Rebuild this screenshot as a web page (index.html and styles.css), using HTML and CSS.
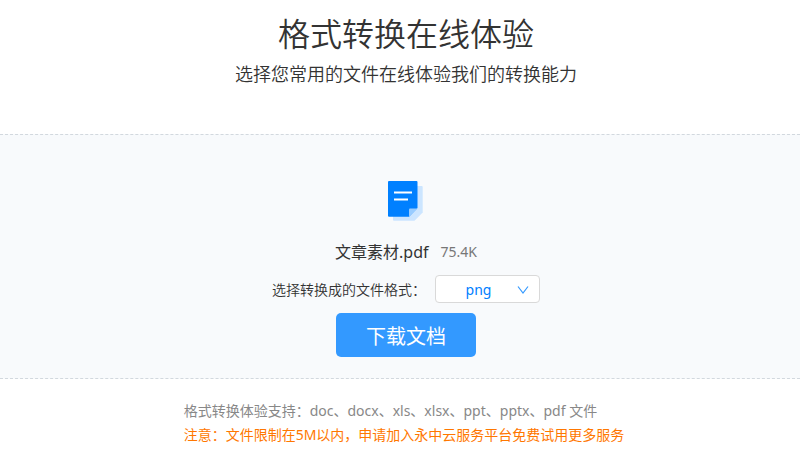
FILE: index.html
```html
<!DOCTYPE html>
<html lang="zh-CN">
<head>
    <meta charset="UTF-8">
    <meta name="viewport" content="width=device-width, initial-scale=1.0">
    <title>格式转换在线体验</title>
    <link rel="stylesheet" href="styles.css">
</head>
<body>
<header class="header">
    <h1 class="title">格式转换在线体验</h1>
    <p class="subtitle">选择您常用的文件在线体验我们的转换能力</p>
</header>

<main class="convert">
    <svg class="file-icon" width="36" height="40" viewBox="0 0 36 40" aria-hidden="true">
        <path d="M6 5h27.700a1 1 0 0 1 1 1v25.500L26.500 39.700H6a1 1 0 0 1-1-1V6a1 1 0 0 1 1-1z" fill="#cce5ff"/>
        <path d="M1 0h27.500a1 1 0 0 1 1 1v26l-8.500 8.800H1a1 1 0 0 1-1-1V1a1 1 0 0 1 1-1z" fill="#0080ff"/>
        <path d="M21 35.800v-7.300a1 1 0 0 1 1-1h7.500z" fill="#99ccff"/>
        <path d="M6 11.500h18M6 18.500h14" stroke="#fff" stroke-width="2"/>
    </svg>
    <div class="file">
        <span class="file-name">文章素材.pdf</span>
        <span class="file-size">75.4K</span>
    </div>
    <div class="format">
        <label for="formatSelect">选择转换成的文件格式：</label>
        <div class="select-box">
            <select id="formatSelect">
                <option>png</option>
            </select>
            <svg class="arrow" width="12" height="10" viewBox="0 0 12 10" aria-hidden="true">
                <path d="M1 1.500L6 8l5-6.500" fill="none" stroke="#3399ff" stroke-width="1.200"/>
            </svg>
        </div>
    </div>
    <button class="download" type="button">下载文档</button>
</main>

<footer class="tips">
    <p>格式转换体验支持：doc、docx、xls、xlsx、ppt、pptx、pdf 文件</p>
    <p class="notice">注意：文件限制在5M以内，申请加入永中云服务平台免费试用更多服务</p>
</footer>
</body>
</html>
```

FILE: styles.css
```css
body {
    margin: 0;
    background: #fff;
    color: #333;
    font-family: "Noto Sans", "Noto Sans CJK SC", sans-serif;
    font-weight: 400;
}
h1, p {
    margin: 0;
    font-weight: inherit;
}
.header {
    padding: 8px 0 46px 12px;
    text-align: center;
}
.title, .subtitle, .format label {
    font-weight: 350;
}
.title {
    font-size: 32px;
    line-height: 52px;
}
.subtitle {
    font-size: 18px;
    line-height: 28px;
}
.convert {
    display: flex;
    flex-direction: column;
    align-items: center;
    padding: 46px 0 21px 12px;
    background: #f8fafc;
    border-top: 1px dashed #d2d8de;
    border-bottom: 1px dashed #d2d8de;
}
.file {
    display: flex;
    align-items: center;
    gap: 12px;
    margin-top: 19px;
    line-height: 24px;
}
.file-name {
    font-size: 16px;
}
.file-size {
    color: #777;
    font-size: 14px;
}
.format {
    display: flex;
    align-items: center;
    gap: 9px;
    margin: 11px 0 10px;
    font-size: 14px;
}
.select-box {
    position: relative;
    width: 105px;
}
.select-box select {
    display: block;
    box-sizing: border-box;
    width: 100%;
    height: 28px;
    padding: 0 18px 0 0;
    border: 1px solid #d9d9d9;
    border-radius: 4px;
    background: #fff;
    color: #0080ff;
    font: inherit;
    text-align-last: center;
    appearance: none;
    cursor: pointer;
}
.arrow {
    position: absolute;
    top: 10px;
    right: 11px;
    pointer-events: none;
}
.download {
    width: 140px;
    height: 44px;
    padding: 0;
    border: none;
    border-radius: 5px;
    background: #3399ff;
    color: #fff;
    font: inherit;
    font-size: 20px;
    cursor: pointer;
}
.download:hover {
    background: #1a8cff;
}
.tips {
    width: fit-content;
    margin: 0 auto;
    padding: 20px 0 3px 8px;
    color: #888;
    font-size: 14px;
    line-height: 24px;
}
.notice {
    color: #ff7700;
}
```
